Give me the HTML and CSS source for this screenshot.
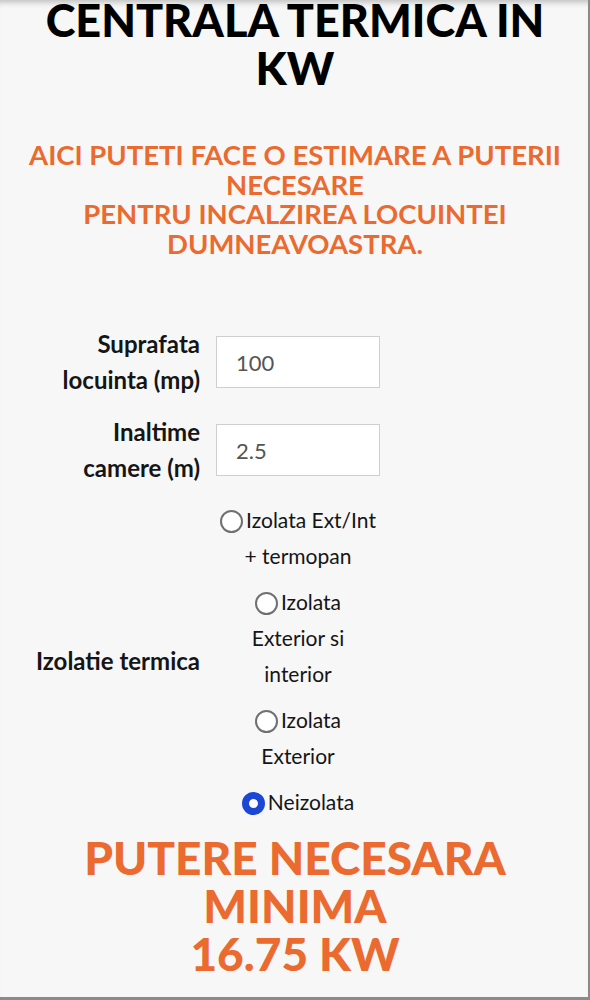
FILE: index.html
```html
<!DOCTYPE html>
<html lang="ro">
<head>
    <meta charset="UTF-8">
    <meta name="viewport" content="width=device-width, initial-scale=1.0">
    <title>Centrala termica in KW</title>
    <link rel="stylesheet" href="styles.css">
</head>
<body>
    <div class="frame"></div>
    <div class="page">
        <h1 class="title">CENTRALA TERMICA IN KW</h1>
        <h2 class="intro">AICI PUTETI FACE O ESTIMARE A PUTERII NECESARE<br>PENTRU INCALZIREA LOCUINTEI DUMNEAVOASTRA.</h2>

        <table class="calc">
            <tr>
                <td class="label">Suprafata locuinta (mp)</td>
                <td class="field"><input type="text" value="100"></td>
            </tr>
            <tr>
                <td class="label">Inaltime camere (m)</td>
                <td class="field"><input type="text" value="2.5"></td>
            </tr>
            <tr>
                <td class="label">Izolatie termica</td>
                <td class="field options">
                    <label class="option"><input type="radio" name="izolatie">Izolata Ext/Int + termopan</label>
                    <label class="option"><input type="radio" name="izolatie">Izolata Exterior si interior</label>
                    <label class="option"><input type="radio" name="izolatie">Izolata Exterior</label>
                    <label class="option"><input type="radio" name="izolatie" checked>Neizolata</label>
                </td>
            </tr>
        </table>

        <h2 class="result">PUTERE NECESARA MINIMA<br>16.75 KW</h2>
    </div>
</body>
</html>
```

FILE: styles.css
```css
html, body {
    margin: 0;
    padding: 0;
}
body {
    font-family: Lato, "Open Sans", sans-serif;
    background-color: #f7f7f7;
    color: #151515;
}
.frame {
    position: fixed;
    top: 0;
    left: 0;
    right: 0;
    bottom: 0;
    border-right: 2px solid #8a8a8a;
    border-bottom: 3px solid #8a8a8a;
    box-shadow: inset 0 7px 6px -5px rgba(0, 0, 0, 0.25);
    pointer-events: none;
}
.page {
    padding: 0 12px;
}
.title {
    margin: -4px 0 0;
    font-size: 45px;
    line-height: 48px;
    font-weight: 900;
    text-align: center;
    color: #000;
}
.intro {
    margin: 48px 0 0;
    font-size: 27.5px;
    line-height: 29.5px;
    font-weight: 700;
    text-align: center;
    color: #ea6a2f;
}
.calc {
    margin: 60px 0 0 18px;
    border-collapse: collapse;
}
.calc td {
    padding: 8px 0;
    vertical-align: middle;
}
.label {
    width: 170px;
    padding-right: 16px !important;
    text-align: right;
    font-size: 24px;
    line-height: 36px;
    font-weight: 700;
}
.field {
    width: 164px;
}
.field input[type="text"] {
    width: 164px;
    height: 52px;
    box-sizing: border-box;
    padding: 0 19px;
    border: 1px solid #cfcfcf;
    background: #fff;
    font-family: Lato, sans-serif;
    font-size: 22px;
    color: #555;
}
.options {
    text-align: center;
    font-size: 21px;
    line-height: 36px;
}
.option {
    display: block;
    margin-bottom: 10px;
}
.option:last-child {
    margin-bottom: 0;
}
.option input {
    appearance: none;
    -webkit-appearance: none;
    width: 23px;
    height: 23px;
    margin: 0 3px 0 0;
    box-sizing: border-box;
    border: 2px solid #707070;
    border-radius: 50%;
    background: #fff;
    vertical-align: -5px;
}
.option input:checked {
    border: 7px solid #1b46d6;
}
.result {
    margin: 6px 0 0;
    font-size: 46px;
    line-height: 48px;
    font-weight: 900;
    text-align: center;
    color: #ea6a2f;
}
```
